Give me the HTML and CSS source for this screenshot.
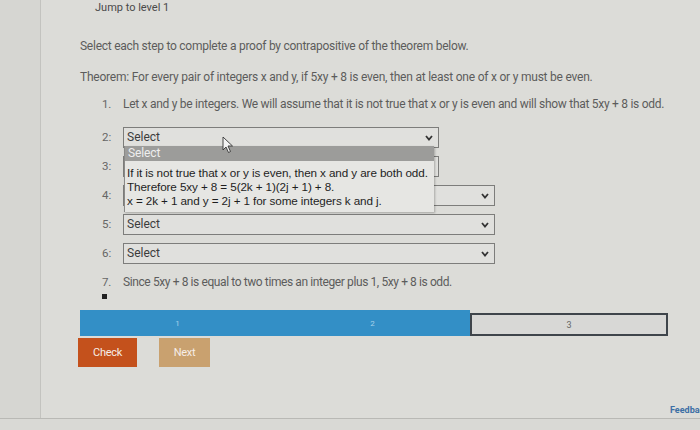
FILE: index.html
```html
<!DOCTYPE html>
<html>
<head>
<meta charset="utf-8">
<link rel="stylesheet" href="styles.css">
</head>
<body>
<div class="screen">
  <div class="side"></div>
  <div class="main">
    <div class="jump">Jump to level 1</div>
    <p class="intro">Select each step to complete a proof by contrapositive of the theorem below.</p>
    <p class="theorem">Theorem: For every pair of integers x and y, if 5xy + 8 is even, then at least one of x or y must be even.</p>
    <div class="step step-text">
      <span class="num">1.</span>
      <span class="txt">Let x and y be integers. We will assume that it is not true that x or y is even and will show that 5xy + 8 is odd.</span>
    </div>
    <div class="rows">
      <div class="row row-open">
        <span class="num">2:</span>
        <div class="sel sel-narrow"><span>Select</span><svg class="chev" viewBox="0 0 8 6"><polyline points="1,1 4,4.5 7,1"/></svg></div>
        <div class="list">
          <div class="opt-hl">Select</div>
          <div class="opts">
            <div class="opt">If it is not true that x or y is even, then x and y are both odd.</div>
            <div class="opt">Therefore 5xy + 8 = 5(2k + 1)(2j + 1) + 8.</div>
            <div class="opt">x = 2k + 1 and y = 2j + 1 for some integers k and j.</div>
          </div>
        </div>
        <svg class="cursor" viewBox="0 0 12 18"><path d="M1 1 L1 14 L4 11 L6.5 16.5 L8.5 15.5 L6 10 L10.5 10 Z"/></svg>
      </div>
      <div class="row">
        <span class="num">3:</span>
        <div class="sel sel-narrow"><span>Select</span></div>
      </div>
      <div class="row">
        <span class="num">4:</span>
        <div class="sel"><span>Select</span><svg class="chev" viewBox="0 0 8 6"><polyline points="1,1 4,4.5 7,1"/></svg></div>
      </div>
      <div class="row">
        <span class="num">5:</span>
        <div class="sel"><span>Select</span><svg class="chev" viewBox="0 0 8 6"><polyline points="1,1 4,4.5 7,1"/></svg></div>
      </div>
      <div class="row">
        <span class="num">6:</span>
        <div class="sel"><span>Select</span><svg class="chev" viewBox="0 0 8 6"><polyline points="1,1 4,4.5 7,1"/></svg></div>
      </div>
    </div>
    <div class="step step7">
      <span class="num">7.</span>
      <span class="txt">Since 5xy + 8 is equal to two times an integer plus 1, 5xy + 8 is odd.</span>
    </div>
    <div class="bullet"></div>
    <div class="progress">
      <div class="seg seg-done">1</div>
      <div class="seg seg-done">2</div>
      <div class="seg seg-todo">3</div>
    </div>
    <div class="buttons">
      <button class="btn btn-check">Check</button>
      <button class="btn btn-next">Next</button>
    </div>
    <div class="footer">Feedback?</div>
  </div>
</div>
</body>
</html>
```
FILE: styles.css
```css
html, body {
  margin: 0;
  padding: 0;
}
body {
  width: 700px;
  height: 430px;
  overflow: hidden;
  background: #d9d9d5;
  font-family: Roboto, "Liberation Sans", sans-serif;
  color: #5c5c5c;
}
.screen {
  display: flex;
  height: 418px;
  border-bottom: 1px solid #b9b9b5;
  background: #dcdcd8;
}
.side {
  width: 40px;
  flex: none;
  background: #d6d6d2;
  border-right: 1px solid #c3c3bf;
}
.main {
  flex: 1;
  padding-left: 39px;
  overflow: hidden;
  white-space: nowrap;
}
.jump {
  margin-left: 15px;
  font-size: 11px;
  line-height: 16px;
  color: #4a4a4a;
}
.intro {
  margin: 22px 0 0;
  font-size: 12px;
  line-height: 16px;
  letter-spacing: -0.26px;
}
.theorem {
  margin: 15px 0 0;
  font-size: 12px;
  line-height: 16px;
  letter-spacing: -0.22px;
}
.step {
  display: flex;
  font-size: 12px;
  letter-spacing: -0.28px;
}
.step-text {
  margin-top: 11px;
  line-height: 16px;
}
.step7 .txt {
  letter-spacing: -0.4px;
}
.num {
  margin-left: 22px;
  width: 21px;
  flex: none;
  font-size: 11.5px;
  color: #666;
}
.rows {
  margin-top: 11px;
}
.row {
  position: relative;
  display: flex;
  align-items: center;
  height: 29px;
  line-height: 29px;
}
.sel {
  position: relative;
  box-sizing: border-box;
  width: 372px;
  height: 21px;
  border: 1px solid #7d7d7b;
  background: #e0e0dd;
  display: flex;
  align-items: center;
  padding-left: 3px;
  font-size: 12px;
  color: #3c3c3c;
  line-height: 19px;
}
.sel-narrow {
  width: 316px;
}
.chev {
  position: absolute;
  right: 5px;
  top: 7px;
  width: 8px;
  height: 6px;
  fill: none;
  stroke: #333;
  stroke-width: 1.8;
}
.list {
  position: absolute;
  z-index: 2;
  left: 44px;
  top: 23px;
  width: 309px;
  background: #e6e6e3;
  border-left: 1px solid #8a8a88;
  box-shadow: 1px 1px 2px rgba(0,0,0,0.25);
  font-family: "Liberation Sans", Arial, sans-serif;
  font-size: 11.7px;
  color: #1e1e1e;
  letter-spacing: -0.1px;
}
.opt-hl {
  height: 15px;
  line-height: 15px;
  background: #9c9c9a;
  color: #eeeeee;
  padding-left: 3px;
  font-family: Roboto, "Liberation Sans", sans-serif;
  font-size: 12px;
}
.opts {
  padding: 5px 0 4px 2px;
}
.opt {
  line-height: 14px;
}
.cursor {
  position: absolute;
  z-index: 3;
  left: 142px;
  top: 13px;
  width: 12px;
  height: 18px;
  fill: #f4f4f4;
  stroke: #333;
  stroke-width: 0.9;
}
.step7 {
  margin-top: 4px;
  line-height: 20px;
}
.bullet {
  margin: 2px 0 0 22px;
  width: 5px;
  height: 5px;
  background: #222;
}
.progress {
  display: flex;
  margin-top: 11px;
  width: 588px;
  height: 26px;
  font-size: 8px;
}
.seg {
  display: flex;
  align-items: center;
  justify-content: center;
}
.seg-done {
  width: 195px;
  background: #338fc6;
  color: #a8d2ea;
}
.seg-todo {
  flex: 1;
  box-sizing: border-box;
  border: 2px solid #3f454b;
  background: #d8d8d6;
  color: #666;
  font-size: 9px;
  margin-top: 3px;
}
.buttons {
  display: flex;
  gap: 22px;
  margin-top: 2px;
  margin-left: -2px;
}
.btn {
  height: 29px;
  border: none;
  font-family: Roboto, "Liberation Sans", sans-serif;
  font-size: 11px;
  color: #f6eee8;
  padding: 0;
  letter-spacing: -0.3px;
}
.btn-check {
  width: 59px;
  background: #c4511c;
}
.btn-next {
  width: 51px;
  background: #c9a16f;
}
.footer {
  margin-top: 37px;
  padding-left: 590px;
  font-size: 9px;
  line-height: 12px;
  font-weight: bold;
  color: #3d6fa5;
}
```
